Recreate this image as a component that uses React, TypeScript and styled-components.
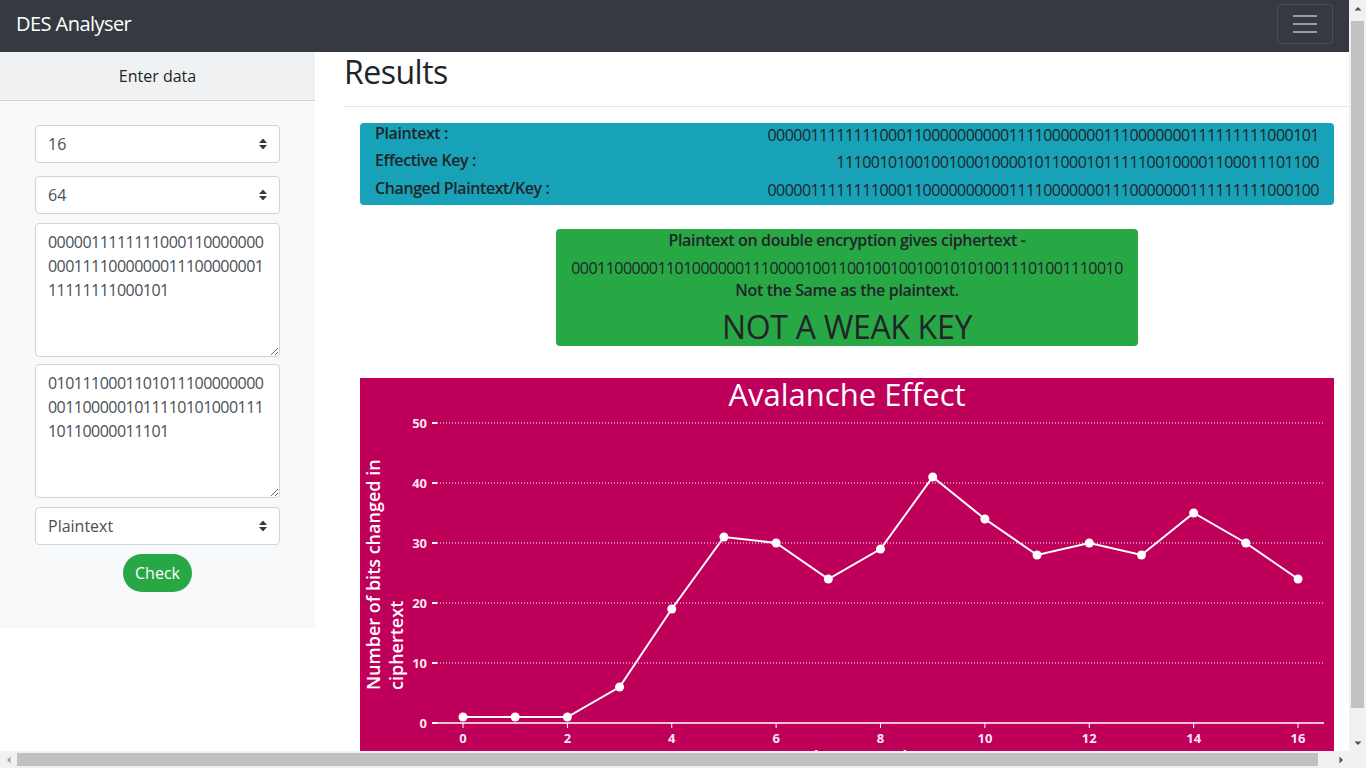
import React from 'react';
import styled, { createGlobalStyle } from 'styled-components';

const Global = createGlobalStyle`
  html, body { margin: 0; padding: 0; overflow: hidden; }
  body {
    font-family: 'Open Sans', 'Noto Sans', sans-serif;
    color: #212529;
    background: #fff;
  }
  * { box-sizing: border-box; }
`;

/* Window frame with classic scrollbars */
const Frame = styled.div`
  display: grid;
  grid-template-columns: 1349px 17px;
  grid-template-rows: 751px 17px;
  width: 1366px;
  height: 768px;
`;

const Viewport = styled.div`
  overflow: hidden;
`;

const VBar = styled.div`
  background: #f1f1f1;
  display: flex;
  flex-direction: column;
`;

const HBar = styled.div`
  background: #f1f1f1;
  display: flex;
`;

const Corner = styled.div`
  background: #f1f1f1;
`;

const ArrowCell = styled.div`
  width: 17px;
  height: 17px;
  flex: none;
  display: flex;
  align-items: center;
  justify-content: center;
`;

const VThumb = styled.div`
  margin: 4px 2px 0;
  height: 687px;
  background: #c1c1c1;
`;

const HThumb = styled.div`
  margin: 2px 0;
  width: 1301px;
  background: #c1c1c1;
`;

const Spacer = styled.div`
  flex: 1;
`;

const Navbar = styled.nav`
  height: 52px;
  background: #343a40;
  display: flex;
  justify-content: space-between;
  align-items: flex-start;
  padding: 4px 16px 0;
`;

const Brand = styled.a`
  color: #fff;
  font-size: 20px;
  line-height: 30px;
  letter-spacing: -0.55px;
  margin-top: 5px;
  text-decoration: none;
`;

const Toggler = styled.button`
  width: 56px;
  height: 40px;
  border: 1px solid rgba(255, 255, 255, 0.1);
  border-radius: 4px;
  background: transparent;
  display: flex;
  align-items: center;
  justify-content: center;
  padding: 0;
`;

const Row = styled.div`
  display: flex;
  width: 1364px;
  align-items: flex-start;
`;

const Sidebar = styled.aside`
  width: 315px;
  flex: none;
  background: #f8f9fa;
`;

const SideHeader = styled.div`
  height: 49px;
  padding: 12px 0;
  line-height: 24px;
  font-size: 16px;
  text-align: center;
  background: rgba(0, 0, 0, 0.03);
  border-bottom: 1px solid rgba(0, 0, 0, 0.125);
`;

const Form = styled.form`
  padding: 24px 35px 36px;
  display: flex;
  flex-direction: column;
`;

const SelectWrap = styled.div<{ $gap: number }>`
  position: relative;
  margin-top: ${(p) => p.$gap}px;
`;

const Select = styled.select`
  appearance: none;
  -webkit-appearance: none;
  display: block;
  width: 100%;
  height: 38px;
  padding: 6px 28px 6px 12px;
  font-family: inherit;
  font-size: 16px;
  line-height: 24px;
  color: #495057;
  background: #fff;
  border: 1px solid #ced4da;
  border-radius: 4px;
`;

const Arrow = styled.svg`
  position: absolute;
  right: 13px;
  top: 50%;
  transform: translateY(-50%);
  pointer-events: none;
`;

const TextArea = styled.textarea<{ $gap: number }>`
  display: block;
  width: 100%;
  height: 134px;
  margin-top: ${(p) => p.$gap}px;
  padding: 6px 12px;
  font-family: inherit;
  font-size: 16px;
  line-height: 24px;
  letter-spacing: -0.53px;
  color: #495057;
  background: #fff;
  border: 1px solid #ced4da;
  border-radius: 4px;
  resize: vertical;
`;

const CheckButton = styled.button`
  align-self: center;
  margin-top: 9px;
  height: 38px;
  padding: 0 12px;
  font-family: inherit;
  font-size: 16px;
  line-height: 24px;
  color: #fff;
  background: #28a745;
  border: none;
  border-radius: 19px;
`;

const Main = styled.main`
  flex: 1;
  padding: 1px 14px 0 29px;
`;

const Title = styled.h2`
  margin: 0;
  font-size: 32px;
  font-weight: 500;
  line-height: 38px;
  letter-spacing: -0.5px;
`;

const Divider = styled.div`
  height: 1px;
  margin-top: 15px;
  background: rgba(0, 0, 0, 0.1);
`;

const InfoBox = styled.section`
  margin: 16px 16px 0;
  padding: 0 15px;
  background: #17a2b8;
  border-radius: 4px;
`;

const InfoRow = styled.div`
  display: flex;
  justify-content: space-between;
  align-items: flex-start;
  height: 27.33px;
`;

const InfoLabel = styled.span`
  font-size: 16px;
  font-weight: 600;
  line-height: 20px;
  letter-spacing: -0.4px;
`;

const Binary = styled.span`
  font-size: 16px;
  line-height: 20px;
  padding-top: 2px;
  letter-spacing: -0.53px;
`;

const ResultBox = styled.section`
  width: 582px;
  margin: 24px auto 0;
  padding: 1px 0 1px;
  background: #28a745;
  border-radius: 4px;
  text-align: center;
`;

const ResultLine = styled.div`
  font-size: 16px;
  font-weight: 600;
  line-height: 20px;
  letter-spacing: -0.35px;
`;

const CipherLine = styled.div`
  font-size: 16px;
  line-height: 23px;
  margin-top: 7px;
  letter-spacing: -0.53px;
`;

const Verdict = styled.div`
  font-size: 32px;
  font-weight: 500;
  line-height: 37px;
  margin-top: 8px;
  letter-spacing: -0.3px;
`;

const ChartBox = styled.section`
  margin: 32px 16px 0;
  height: 405px;
  background: #bf005b;
`;

const ChartSvg = styled.svg`
  display: block;
  font-family: 'Open Sans', 'Noto Sans', sans-serif;
`;

const data = [1, 1, 1, 6, 19, 31, 30, 24, 29, 41, 34, 28, 30, 28, 35, 30, 24];

const L1 = '0000011111111000110000000';
const L2 = '0001111000000011100000001';
const plaintext = L1 + L2 + '11111111000101';
const changed = L1 + L2 + '11111111000100';
const keyInput = '0101110001101011100000000' + '0011000001011110101000111' + '10110000011101';
const key = '11100101001001000100001011000101111100100001100011101100';
const cipher = '0001100000110100000011100001001100100100100101010011101001110010';

const SelectArrow = () => (
  <Arrow width="8" height="11" viewBox="0 0 8 11">
    <path d="M0 4.5 L4 0 L8 4.5 Z M0 6.5 L4 11 L8 6.5 Z" fill="#343a40" />
  </Arrow>
);

const ScrollArrow = ({ dir, color }: { dir: 'up' | 'down' | 'left' | 'right'; color: string }) => {
  const d = {
    up: 'M0.5 4.5 L4 1 L7.5 4.5 Z',
    down: 'M0.5 1.5 L4 5 L7.5 1.5 Z',
    left: 'M4.5 0.5 L1 4 L4.5 7.5 Z',
    right: 'M1.5 0.5 L5 4 L1.5 7.5 Z',
  }[dir];
  const vertical = dir === 'up' || dir === 'down';
  return (
    <ArrowCell>
      <svg width={vertical ? 8 : 6} height={vertical ? 6 : 8} viewBox={vertical ? '0 0 8 6' : '0 0 6 8'}>
        <path d={d} fill={color} />
      </svg>
    </ArrowCell>
  );
};

const Chart = () => {
  const x0 = 103;
  const dx = 52.19;
  const y0 = 345;
  const dy = 6;
  const px = (i: number) => x0 + i * dx;
  const py = (v: number) => y0 - v * dy;
  const ticks = [0, 10, 20, 30, 40, 50];
  const pts = data.map((v, i) => `${px(i)},${py(v)}`).join(' ');
  return (
    <ChartSvg width="974" height="405" viewBox="0 0 974 405">
      <text x="487" y="28" textAnchor="middle" fill="#fff" fontSize="31">
        Avalanche Effect
      </text>
      {ticks.map((t) => (
        <g key={t}>
          {t > 0 && (
            <line x1="77" x2="963" y1={py(t)} y2={py(t)} stroke="#fff" strokeWidth="1" strokeDasharray="1 2" />
          )}
          <line x1="72" x2="77" y1={py(t)} y2={py(t)} stroke="#fff" strokeWidth="2" />
          <text x="67" y={py(t) + 4.5} textAnchor="end" fill="#fff" fillOpacity="0.92" fontSize="13" fontWeight="700">
            {t}
          </text>
        </g>
      ))}
      <line x1="77" x2="964" y1={y0} y2={y0} stroke="#fff" strokeWidth="1.5" />
      {data.map((_, i) =>
        i % 2 === 0 ? (
          <g key={i}>
            <line x1={px(i)} x2={px(i)} y1={y0} y2={y0 + 5} stroke="#fff" strokeWidth="1" />
            <text x={px(i)} y="365" textAnchor="middle" fill="#fff" fillOpacity="0.92" fontSize="13" fontWeight="700">
              {i}
            </text>
          </g>
        ) : null
      )}
      <polyline points={pts} fill="none" stroke="#fff" strokeWidth="2" />
      {data.map((v, i) => (
        <circle key={i} cx={px(i)} cy={py(v)} r="4.5" fill="#fff" />
      ))}
      <text transform="translate(20,312) rotate(-90)" fill="#fff" fontSize="18" fontWeight="600">
        Number of bits changed in
      </text>
      <text transform="translate(43,312) rotate(-90)" fill="#fff" fontSize="18" fontWeight="600">
        ciphertext
      </text>
      <text x="487" y="386" textAnchor="middle" fill="#fff" fontSize="18" fontWeight="600">
        Round Key Number
      </text>
    </ChartSvg>
  );
};

const Page = () => (
  <>
    <Navbar>
      <Brand href="#">DES Analyser</Brand>
      <Toggler type="button" aria-label="Toggle navigation">
        <svg width="24" height="18" viewBox="0 0 24 18">
          <path d="M0 1h24M0 9h24M0 17h24" stroke="rgba(255,255,255,0.5)" strokeWidth="2" />
        </svg>
      </Toggler>
    </Navbar>
    <Row>
      <Sidebar>
        <SideHeader>Enter data</SideHeader>
        <Form onSubmit={(e) => e.preventDefault()}>
          <SelectWrap $gap={0}>
            <Select defaultValue="16">
              <option>16</option>
            </Select>
            <SelectArrow />
          </SelectWrap>
          <SelectWrap $gap={13}>
            <Select defaultValue="64">
              <option>64</option>
            </Select>
            <SelectArrow />
          </SelectWrap>
          <TextArea $gap={9} defaultValue={plaintext} />
          <TextArea $gap={7} defaultValue={keyInput} />
          <SelectWrap $gap={9}>
            <Select defaultValue="Plaintext">
              <option>Plaintext</option>
              <option>Key</option>
            </Select>
            <SelectArrow />
          </SelectWrap>
          <CheckButton type="submit">Check</CheckButton>
        </Form>
      </Sidebar>
      <Main>
        <Title>Results</Title>
        <Divider />
        <InfoBox>
          <InfoRow>
            <InfoLabel>Plaintext :</InfoLabel>
            <Binary>{plaintext}</Binary>
          </InfoRow>
          <InfoRow>
            <InfoLabel>Effective Key :</InfoLabel>
            <Binary>{key}</Binary>
          </InfoRow>
          <InfoRow>
            <InfoLabel>Changed Plaintext/Key :</InfoLabel>
            <Binary>{changed}</Binary>
          </InfoRow>
        </InfoBox>
        <ResultBox>
          <ResultLine>Plaintext on double encryption gives ciphertext -</ResultLine>
          <CipherLine>{cipher}</CipherLine>
          <ResultLine>Not the Same as the plaintext.</ResultLine>
          <Verdict>NOT A WEAK KEY</Verdict>
        </ResultBox>
        <ChartBox>
          <Chart />
        </ChartBox>
      </Main>
    </Row>
  </>
);

export default function App() {
  return (
    <>
      <Global />
      <Frame>
        <Viewport>
          <Page />
        </Viewport>
        <VBar>
          <ScrollArrow dir="up" color="#505050" />
          <VThumb />
          <Spacer />
          <ScrollArrow dir="down" color="#505050" />
        </VBar>
        <HBar>
          <ScrollArrow dir="left" color="#a3a3a3" />
          <HThumb />
          <Spacer />
          <ScrollArrow dir="right" color="#505050" />
        </HBar>
        <Corner />
      </Frame>
    </>
  );
}
